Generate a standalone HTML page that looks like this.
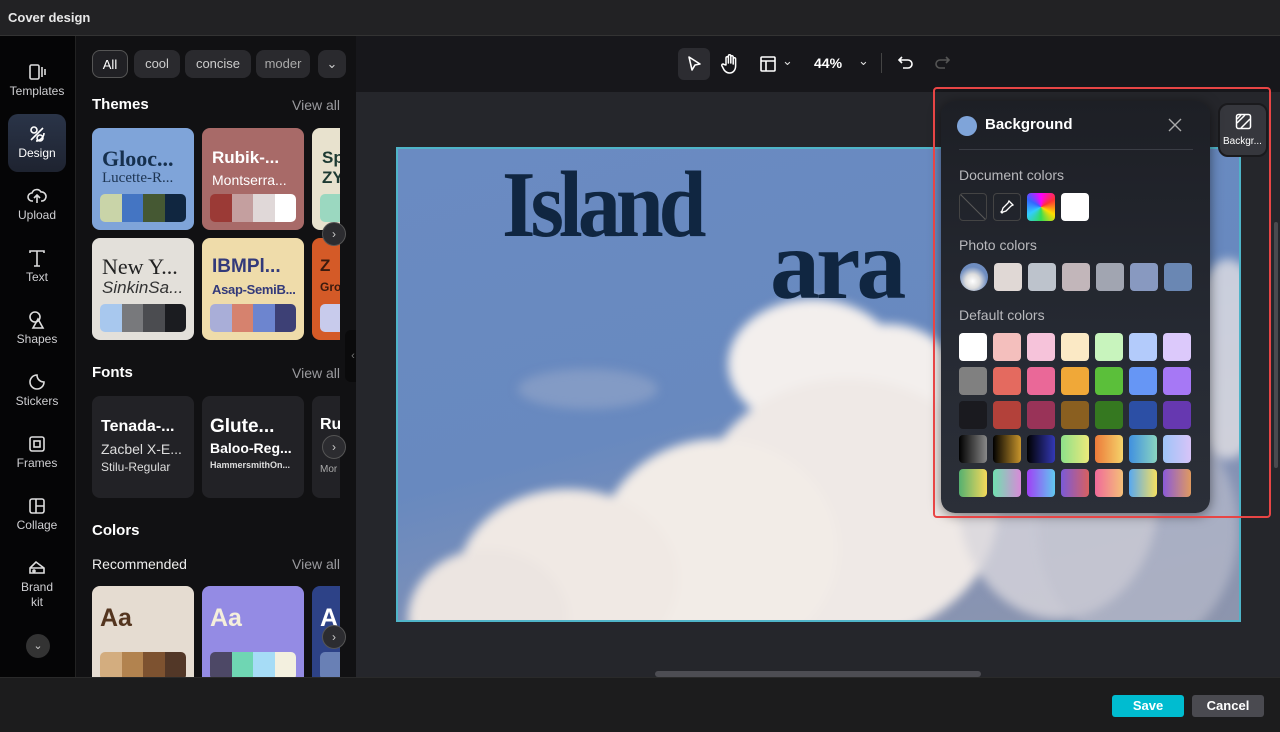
<!DOCTYPE html>
<html><head><meta charset="utf-8"><style>
*{box-sizing:border-box;margin:0;padding:0}
body{width:1280px;height:732px;overflow:hidden;background:#111113;font-family:"Liberation Sans",sans-serif;color:#fff;position:relative}
.abs{position:absolute}
.title{left:0;top:0;width:1280px;height:36px;background:#222224;border-bottom:1px solid #333;font-size:13px;font-weight:bold;line-height:36px;padding-left:8px;color:#e8e8e8}
.rail{left:0;top:36px;width:76px;height:641px;background:#050506;border-right:1px solid #222}
.ri{position:absolute;left:8px;width:58px;text-align:center;font-size:12px;color:#cfcfd2}
.ri svg{display:block;margin:0 auto 2px}
.panel{left:76px;top:36px;width:280px;height:641px;background:#111113;overflow:hidden}
.chip{position:absolute;top:14px;height:28px;border-radius:8px;background:#2a2a2e;font-size:13px;color:#ccc;line-height:28px;text-align:center}
.h{position:absolute;font-size:15px;font-weight:bold;color:#fff}
.va{position:absolute;right:16px;font-size:14px;color:#9a9a9e}
.card{position:absolute;width:102px;height:102px;border-radius:8px;overflow:hidden;white-space:nowrap}
.pal{position:absolute;left:8px;bottom:8px;width:86px;height:28px;border-radius:5px;overflow:hidden;display:flex}
.pal i{flex:1}
.arrow{position:absolute;width:24px;height:24px;border-radius:50%;background:#2c2c30;border:1px solid #555;color:#ccc;font-size:12px;text-align:center;line-height:22px}
.canvasarea{left:356px;top:36px;width:924px;height:641px;background:#25262b}
.toolbar{left:356px;top:36px;width:924px;height:56px;background:#17171b}
.bottom{left:0;top:677px;width:1280px;height:55px;background:#1c1c1d;border-top:1px solid #2a2a2a}
.pop{left:941px;top:101px;width:269px;height:412px;border-radius:14px;background:linear-gradient(180deg,#1d1f25,#262a33 60%,#2b2f38);box-shadow:0 2px 12px rgba(0,0,0,.5)}
.sw{position:absolute;width:28px;height:28px;border-radius:4px}
.lbl{position:absolute;left:18px;font-size:14px;color:#b8b8bc}
.c{position:absolute;border-radius:50%;background:#f3efed}
</style></head><body>
<div class="abs title">Cover design</div>

<div class="abs rail">
 <div class="ri" style="top:26px"><svg width="20" height="20" viewBox="0 0 20 20" fill="none" stroke="#ddd" stroke-width="1.6"><rect x="3" y="3" width="9" height="14" rx="1.5"/><path d="M15 5v10M18 7v6"/></svg>Templates</div>
 <div class="ri" style="top:78px;height:58px;border-radius:10px;background:linear-gradient(180deg,#2a3448,#1e2330);padding-top:10px;color:#fff"><svg width="20" height="20" viewBox="0 0 20 20" fill="none" stroke="#fff" stroke-width="1.6"><circle cx="7" cy="6" r="3"/><path d="M4 16l12-12M9 17c4 0 8-4 8-8"/><circle cx="13" cy="14" r="3"/></svg>Design</div>
 <div class="ri" style="top:150px"><svg width="20" height="20" viewBox="0 0 20 20" fill="none" stroke="#ddd" stroke-width="1.6"><path d="M6 15H5a4 4 0 010-8 5 5 0 019-1 4 4 0 011 9h-1M10 9v8M7 12l3-3 3 3"/></svg>Upload</div>
 <div class="ri" style="top:212px"><svg width="20" height="20" viewBox="0 0 20 20" fill="none" stroke="#ddd" stroke-width="1.6"><path d="M3 5V3h14v2M10 3v15M7 18h6"/></svg>Text</div>
 <div class="ri" style="top:274px"><svg width="20" height="20" viewBox="0 0 20 20" fill="none" stroke="#ddd" stroke-width="1.6"><circle cx="8" cy="7" r="5"/><path d="M11 9l5 9H6z"/></svg>Shapes</div>
 <div class="ri" style="top:336px"><svg width="20" height="20" viewBox="0 0 20 20" fill="none" stroke="#ddd" stroke-width="1.6"><path d="M17 10a7 7 0 11-7-7c0 4 3 7 7 7z"/></svg>Stickers</div>
 <div class="ri" style="top:398px"><svg width="20" height="20" viewBox="0 0 20 20" fill="none" stroke="#ddd" stroke-width="1.6"><rect x="3" y="3" width="14" height="14" rx="2"/><rect x="7" y="7" width="6" height="6"/></svg>Frames</div>
 <div class="ri" style="top:460px"><svg width="20" height="20" viewBox="0 0 20 20" fill="none" stroke="#ddd" stroke-width="1.6"><rect x="3" y="3" width="14" height="14" rx="2"/><path d="M9 3v14M9 10h8"/></svg>Collage</div>
 <div class="ri" style="top:522px;line-height:15px"><svg width="20" height="20" viewBox="0 0 20 20" fill="none" stroke="#ddd" stroke-width="1.6"><path d="M3 10l6-6 8 6v5H3zM3 10h14"/><circle cx="7" cy="13" r="1"/></svg>Brand<br>kit</div>
 <div class="abs" style="left:26px;top:598px;width:24px;height:24px;border-radius:50%;background:#333;color:#ccc;font-size:11px;text-align:center;line-height:24px">⌄</div>
</div>

<div class="abs panel">
 <div class="chip" style="left:16px;width:36px;border:1px solid #555;color:#fff;background:#202024">All</div>
 <div class="chip" style="left:58px;width:46px">cool</div>
 <div class="chip" style="left:109px;width:66px">concise</div>
 <div class="chip" style="left:180px;width:54px;overflow:hidden;color:#aaa">moder</div>
 <div class="chip" style="left:242px;width:28px">⌄</div>
 <div class="h" style="left:16px;top:60px">Themes</div><div class="va" style="top:61px">View all</div>

 <div class="card" style="left:16px;top:92px;background:#7fa4d9"><div class="abs" style="left:10px;top:18px;font:bold 22px 'Liberation Serif',serif;color:#16304e">Glooc...</div><div class="abs" style="left:10px;top:42px;font:15px 'Liberation Serif',serif;color:#1d3553">Lucette-R...</div><div class="pal"><i style="background:#c9d4a8"></i><i style="background:#4475c3"></i><i style="background:#455833"></i><i style="background:#102640"></i></div></div>
 <div class="card" style="left:126px;top:92px;background:#a86a68"><div class="abs" style="left:10px;top:20px;font:bold 17px sans-serif;color:#fff">Rubik-...</div><div class="abs" style="left:10px;top:44px;font:14px sans-serif;color:#fff">Montserra...</div><div class="pal"><i style="background:#9b3a36"></i><i style="background:#c49f9f"></i><i style="background:#e0d8d8"></i><i style="background:#fff"></i></div></div>
 <div class="card" style="left:236px;top:92px;background:#e8e2ce"><div class="abs" style="left:10px;top:20px;font:bold 17px sans-serif;color:#1d3a32">Sp<br>ZY</div><div class="abs" style="left:8px;bottom:8px;width:40px;height:28px;background:#9bd8c0;border-radius:5px"></div></div>
 <div class="card" style="left:16px;top:202px;background:#e3e0da"><div class="abs" style="left:10px;top:16px;font:22px 'Liberation Serif',serif;color:#222">New Y...</div><div class="abs" style="left:10px;top:40px;font:italic 17px sans-serif;color:#333">SinkinSa...</div><div class="pal"><i style="background:#a8c8ee"></i><i style="background:#78797c"></i><i style="background:#4b4c50"></i><i style="background:#1b1c20"></i></div></div>
 <div class="card" style="left:126px;top:202px;background:#efdcaa"><div class="abs" style="left:10px;top:18px;font:bold 19px sans-serif;color:#333a7a">IBMPl...</div><div class="abs" style="left:10px;top:44px;font:bold 13px sans-serif;color:#333a7a;letter-spacing:-0.3px">Asap-SemiB...</div><div class="pal"><i style="background:#a9aed8"></i><i style="background:#d6826e"></i><i style="background:#6d85cf"></i><i style="background:#3d4075"></i></div></div>
 <div class="card" style="left:236px;top:202px;background:#d45a27"><div class="abs" style="left:8px;top:18px;font:bold 17px sans-serif;color:#3a1a0e">Z<br><span style="font-size:12px">Gro</span></div><div class="abs" style="left:8px;bottom:8px;width:40px;height:28px;background:#c8cbec;border-radius:5px"></div></div>

 <div class="h" style="left:16px;top:328px">Fonts</div><div class="va" style="top:329px">View all</div>
 <div class="card" style="left:16px;top:360px;background:#222226"><div class="abs" style="left:9px;top:22px;font:bold 16px sans-serif">Tenada-...</div><div class="abs" style="left:9px;top:45px;font:14px sans-serif;color:#ddd">Zacbel X-E...</div><div class="abs" style="left:9px;top:64px;font:12px sans-serif;color:#ddd">Stilu-Regular</div></div>
 <div class="card" style="left:126px;top:360px;background:#222226"><div class="abs" style="left:8px;top:20px;font:bold 19px sans-serif">Glute...</div><div class="abs" style="left:8px;top:44px;font:bold 14px sans-serif">Baloo-Reg...</div><div class="abs" style="left:8px;top:64px;font:bold 9px sans-serif;color:#ddd">HammersmithOn...</div></div>
 <div class="card" style="left:236px;top:360px;background:#222226"><div class="abs" style="left:8px;top:20px;font:bold 16px sans-serif">Ru</div><div class="abs" style="left:8px;top:68px;font:10px sans-serif;color:#aaa">Mor</div></div>

 <div class="h" style="left:16px;top:486px">Colors</div>
 <div class="abs" style="left:16px;top:520px;font-size:14px;color:#eee">Recommended</div><div class="va" style="top:520px">View all</div>
 <div class="card" style="left:16px;top:550px;height:120px;background:#e5dcd1"><div class="abs" style="left:8px;top:18px;font:bold 25px sans-serif;color:#54351f">Aa</div><div class="pal" style="bottom:auto;top:66px"><i style="background:#d3ad7f"></i><i style="background:#b2834f"></i><i style="background:#7d5230"></i><i style="background:#523727"></i></div></div>
 <div class="card" style="left:126px;top:550px;height:120px;background:#948be4"><div class="abs" style="left:8px;top:18px;font:bold 25px sans-serif;color:#f5efdc">Aa</div><div class="pal" style="bottom:auto;top:66px"><i style="background:#4d4866"></i><i style="background:#6fd6b3"></i><i style="background:#a6dcf6"></i><i style="background:#f3f0df"></i></div></div>
 <div class="card" style="left:236px;top:550px;height:120px;background:#2d4287"><div class="abs" style="left:8px;top:18px;font:bold 25px sans-serif">A</div><div class="abs" style="left:8px;top:66px;width:40px;height:28px;background:#6980b5;border-radius:5px"></div></div>
 <div class="abs" style="left:264px;top:80px;width:16px;height:600px;background:#111113"></div>
 <div class="arrow" style="left:246px;top:186px">›</div>
 <div class="arrow" style="left:246px;top:399px">›</div>
 <div class="arrow" style="left:246px;top:589px">›</div>
</div>
<div class="abs" style="left:345px;top:330px;width:16px;height:52px;background:#0a0a0b;border-radius:6px;color:#777;font-size:11px;line-height:52px;text-align:center">‹</div>

<div class="abs canvasarea"></div>
<div class="abs toolbar">
 <div class="abs" style="left:322px;top:12px;width:32px;height:32px;border-radius:6px;background:#2c2c31"></div>
 <svg class="abs" style="left:329px;top:19px" width="18" height="18" viewBox="0 0 18 18" fill="none" stroke="#fff" stroke-width="1.6" stroke-linejoin="round"><path d="M4 2l11 7-5 1-3 5z"/></svg>
 <svg class="abs" style="left:364px;top:17px" width="20" height="22" viewBox="0 0 20 22" fill="none" stroke="#fff" stroke-width="1.5" stroke-linejoin="round"><path d="M6 12V5a1.2 1.2 0 012.4 0v5V3a1.2 1.2 0 012.4 0v7V4a1.2 1.2 0 012.4 0v7V6a1.2 1.2 0 012.4 0v7c0 4-2.5 7-6 7-2.5 0-4-1-5.5-3L2 13a1.2 1.2 0 012-1.5z"/></svg>
 <svg class="abs" style="left:403px;top:19px" width="18" height="18" viewBox="0 0 18 18" fill="none" stroke="#fff" stroke-width="1.6"><rect x="2" y="2" width="14" height="14" rx="1"/><path d="M2 6h14M7 6v10"/></svg>
 <div class="abs" style="left:426px;top:17px;font-size:13px;color:#ddd">⌄</div>
 <div class="abs" style="left:458px;top:19px;font-size:14px;font-weight:bold;color:#fff">44%</div>
 <div class="abs" style="left:502px;top:17px;font-size:13px;color:#ddd">⌄</div>
 <div class="abs" style="left:525px;top:17px;width:1px;height:20px;background:#444"></div>
 <svg class="abs" style="left:541px;top:19px" width="18" height="18" viewBox="0 0 18 18" fill="none" stroke="#fff" stroke-width="1.6"><path d="M5 2L2 5l3 3M2 5h9a4 4 0 010 8H6"/></svg>
 <svg class="abs" style="left:577px;top:19px" width="18" height="18" viewBox="0 0 18 18" fill="none" stroke="#555" stroke-width="1.6"><path d="M13 2l3 3-3 3M16 5H7a4 4 0 000 8h5"/></svg>
</div>

<div class="abs" style="left:396px;top:147px;width:845px;height:475px;border:2px solid #4fb4c8;overflow:hidden;background:linear-gradient(165deg,#6a8bc2 0%,#6889bf 50%,#8392b6 75%,#8d95ad 100%)">
 <div class="abs" style="left:0;top:0;width:845px;height:475px;filter:blur(5px)">
  <div class="c" style="left:330px;top:150px;width:170px;height:130px"></div>
  <div class="c" style="left:420px;top:175px;width:140px;height:120px"></div>
  <div class="c" style="left:300px;top:230px;width:300px;height:260px;background:#efe9e6"></div>
  <div class="c" style="left:200px;top:290px;width:240px;height:220px;background:#f2ece7"></div>
  <div class="c" style="left:60px;top:340px;width:220px;height:180px;background:#f0e9e4"></div>
  <div class="c" style="left:10px;top:400px;width:160px;height:140px;background:#ece5e1"></div>
  <div class="c" style="left:560px;top:230px;width:200px;height:240px;background:#d8d6dc;opacity:.8"></div>
  <div class="c" style="left:640px;top:260px;width:200px;height:240px;background:#c0c2cf;opacity:.6"></div>
  <div class="c" style="left:790px;top:110px;width:80px;height:200px;background:#e2e0e4;opacity:.8"></div>
  <div class="c" style="left:120px;top:220px;width:140px;height:40px;background:#8ea2c8;opacity:.7"></div>
 </div>
 <div class="abs" style="left:104px;top:0px;font:bold 86px 'Liberation Serif',serif;color:#102641;letter-spacing:-5px;transform:scaleY(1.1);transform-origin:top left">Island</div>
 <div class="abs" style="left:372px;top:58px;font:bold 100px 'Liberation Serif',serif;color:#102641;letter-spacing:-4px">ara</div>
</div>

<div class="abs" style="left:1218px;top:103px;width:50px;height:54px;border-radius:10px;background:#36373d;border:2px solid #1a1a1d"></div>
<svg class="abs" style="left:1235px;top:113px" width="17" height="17" viewBox="0 0 17 17" fill="none" stroke="#fff" stroke-width="1.5"><rect x="1.5" y="1.5" width="14" height="14" rx="2"/><path d="M2 10l8-8M6 15l9-9M2 6l4-4"/></svg>
<div class="abs" style="left:1223px;top:136px;font-size:10px;color:#fff">Backgr...</div>
<div class="abs" style="left:1274px;top:222px;width:4px;height:246px;border-radius:2px;background:#4a4a4f"></div>

<div class="abs pop">
 <div class="abs" style="left:16px;top:15px;width:20px;height:20px;border-radius:50%;background:#7fa4d9"></div>
 <div class="abs" style="left:44px;top:15px;font-size:15px;font-weight:bold">Background</div>
 <svg class="abs" style="left:227px;top:17px" width="14" height="14" viewBox="0 0 14 14" stroke="#aaa" stroke-width="1.4"><path d="M1 1l12 12M13 1L1 13"/></svg>
 <div class="abs" style="left:18px;top:48px;width:234px;height:1px;background:#3a3d45"></div>
 <div class="lbl" style="top:66px">Document colors</div>
 <div class="sw" style="left:18px;top:92px;border:1px solid #444;background:linear-gradient(to top right,transparent 48%,#555 49%,#555 51%,transparent 52%)"></div>
 <div class="sw" style="left:52px;top:92px;border:1px solid #444"></div>
 <svg class="abs" style="left:58px;top:98px" width="16" height="16" viewBox="0 0 16 16" fill="none" stroke="#fff" stroke-width="1.3"><path d="M10 2l4 4-2 1-5 5-3 1-1 1-1-1 1-1 1-3 5-5z"/></svg>
 <div class="sw" style="left:86px;top:92px;background:conic-gradient(from 0deg,#f0f,#f33,#fd0,#3d5,#3cf,#36f,#f0f)"></div>
 <div class="sw" style="left:120px;top:92px;background:#fff"></div>
 <div class="lbl" style="top:136px">Photo colors</div>
 <div class="sw" style="left:19px;top:162px;border-radius:50%;background:radial-gradient(circle at 45% 65%,#fff 0%,#ddd 30%,#6f8dc0 60%)"></div>
 <div class="sw" style="left:53px;top:162px;background:#e0d8d5"></div>
 <div class="sw" style="left:87px;top:162px;background:#bdc3cc"></div>
 <div class="sw" style="left:121px;top:162px;background:#c2b6ba"></div>
 <div class="sw" style="left:155px;top:162px;background:#a1a5b1"></div>
 <div class="sw" style="left:189px;top:162px;background:#8899c0"></div>
 <div class="sw" style="left:223px;top:162px;background:#6a87b3"></div>
 <div class="lbl" style="top:206px">Default colors</div>
</div>

<div class="abs" style="left:933px;top:87px;width:338px;height:431px;border:2px solid #e84545;border-radius:4px"></div>

<div class="abs" style="left:655px;top:671px;width:326px;height:6px;border-radius:3px;background:#4d4d53"></div>
<div class="abs bottom">
 <div class="abs" style="left:1112px;top:17px;width:72px;height:22px;border-radius:3px;background:#00bcd0;font-size:13px;font-weight:bold;text-align:center;line-height:22px">Save</div>
 <div class="abs" style="left:1192px;top:17px;width:72px;height:22px;border-radius:3px;background:#4a4a50;font-size:13px;font-weight:bold;text-align:center;line-height:22px">Cancel</div>
</div>

<div class="abs" style="left:959px;top:333px">
<div class="sw" style="left:0;top:0;background:#fff"></div><div class="sw" style="left:34px;top:0;background:#f4bfbd"></div><div class="sw" style="left:68px;top:0;background:#f6c3da"></div><div class="sw" style="left:102px;top:0;background:#fbe9c5"></div><div class="sw" style="left:136px;top:0;background:#c8f4bd"></div><div class="sw" style="left:170px;top:0;background:#b3cbfb"></div><div class="sw" style="left:204px;top:0;background:#dcc9fb"></div>
<div class="sw" style="left:0;top:34px;background:#808080"></div><div class="sw" style="left:34px;top:34px;background:#e46a5f"></div><div class="sw" style="left:68px;top:34px;background:#ea6898"></div><div class="sw" style="left:102px;top:34px;background:#f0a838"></div><div class="sw" style="left:136px;top:34px;background:#5bbf3a"></div><div class="sw" style="left:170px;top:34px;background:#6696f5"></div><div class="sw" style="left:204px;top:34px;background:#a678f5"></div>
<div class="sw" style="left:0;top:68px;background:#1a1a1f"></div><div class="sw" style="left:34px;top:68px;background:#b3413a"></div><div class="sw" style="left:68px;top:68px;background:#993358"></div><div class="sw" style="left:102px;top:68px;background:#8a5f20"></div><div class="sw" style="left:136px;top:68px;background:#357820"></div><div class="sw" style="left:170px;top:68px;background:#2c4fa5"></div><div class="sw" style="left:204px;top:68px;background:#6638b0"></div>
<div class="sw" style="left:0;top:102px;background:linear-gradient(90deg,#000,#888)"></div><div class="sw" style="left:34px;top:102px;background:linear-gradient(90deg,#000,#c8952c)"></div><div class="sw" style="left:68px;top:102px;background:linear-gradient(90deg,#000,#3338b5)"></div><div class="sw" style="left:102px;top:102px;background:linear-gradient(90deg,#8de08a,#ece97a)"></div><div class="sw" style="left:136px;top:102px;background:linear-gradient(90deg,#ec7a3a,#f5d36a)"></div><div class="sw" style="left:170px;top:102px;background:linear-gradient(90deg,#4090e0,#8ad5c0)"></div><div class="sw" style="left:204px;top:102px;background:linear-gradient(90deg,#9ec4f8,#d8c4f8)"></div>
<div class="sw" style="left:0;top:136px;background:linear-gradient(90deg,#55b070,#f5d95a)"></div><div class="sw" style="left:34px;top:136px;background:linear-gradient(90deg,#70e0b0,#d88ad8)"></div><div class="sw" style="left:68px;top:136px;background:linear-gradient(90deg,#a040f5,#60c8f0)"></div><div class="sw" style="left:102px;top:136px;background:linear-gradient(90deg,#7a5ad8,#d86060)"></div><div class="sw" style="left:136px;top:136px;background:linear-gradient(90deg,#f06a9a,#f5c078)"></div><div class="sw" style="left:170px;top:136px;background:linear-gradient(90deg,#58a8f0,#f5e060)"></div><div class="sw" style="left:204px;top:136px;background:linear-gradient(90deg,#8a5ad8,#e09a60)"></div>
</div>
</body></html>
